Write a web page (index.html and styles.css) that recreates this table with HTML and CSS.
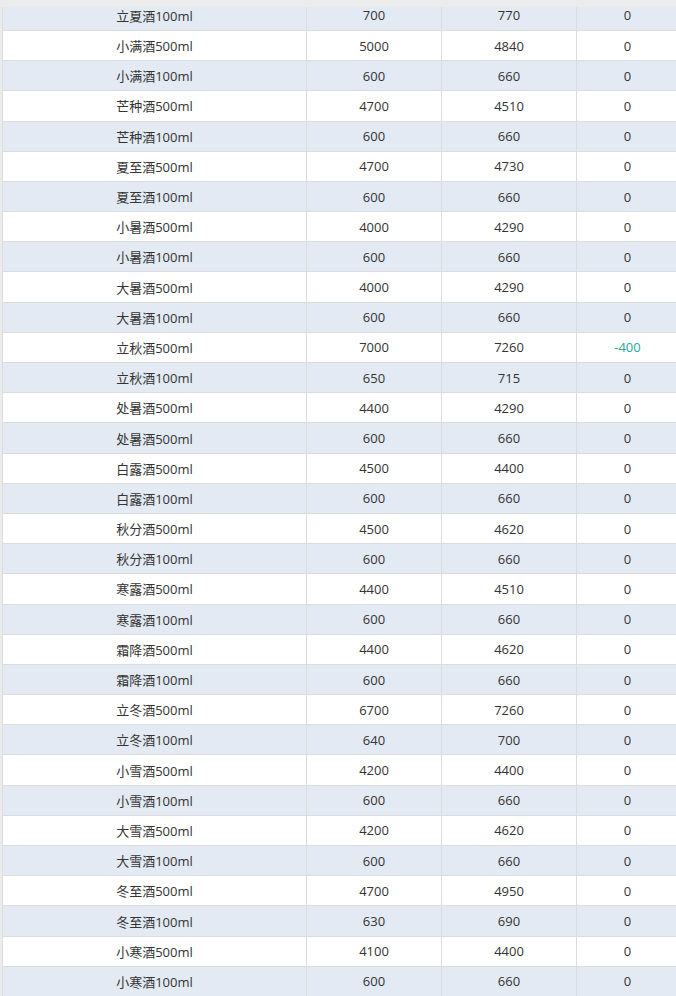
FILE: index.html
```html
<!DOCTYPE html>
<html lang="zh-CN">
<head>
<meta charset="utf-8">
<title>酒品价格表</title>
<link rel="stylesheet" href="styles.css">
</head>
<body>
<div class="topbar"></div>
<div class="table">
  <div class="row"><div class="cell">立夏酒100ml</div><div class="cell">700</div><div class="cell">770</div><div class="cell">0</div></div>
  <div class="row"><div class="cell">小满酒500ml</div><div class="cell">5000</div><div class="cell">4840</div><div class="cell">0</div></div>
  <div class="row"><div class="cell">小满酒100ml</div><div class="cell">600</div><div class="cell">660</div><div class="cell">0</div></div>
  <div class="row"><div class="cell">芒种酒500ml</div><div class="cell">4700</div><div class="cell">4510</div><div class="cell">0</div></div>
  <div class="row"><div class="cell">芒种酒100ml</div><div class="cell">600</div><div class="cell">660</div><div class="cell">0</div></div>
  <div class="row"><div class="cell">夏至酒500ml</div><div class="cell">4700</div><div class="cell">4730</div><div class="cell">0</div></div>
  <div class="row"><div class="cell">夏至酒100ml</div><div class="cell">600</div><div class="cell">660</div><div class="cell">0</div></div>
  <div class="row"><div class="cell">小暑酒500ml</div><div class="cell">4000</div><div class="cell">4290</div><div class="cell">0</div></div>
  <div class="row"><div class="cell">小暑酒100ml</div><div class="cell">600</div><div class="cell">660</div><div class="cell">0</div></div>
  <div class="row"><div class="cell">大暑酒500ml</div><div class="cell">4000</div><div class="cell">4290</div><div class="cell">0</div></div>
  <div class="row"><div class="cell">大暑酒100ml</div><div class="cell">600</div><div class="cell">660</div><div class="cell">0</div></div>
  <div class="row"><div class="cell">立秋酒500ml</div><div class="cell">7000</div><div class="cell">7260</div><div class="cell neg">-400</div></div>
  <div class="row"><div class="cell">立秋酒100ml</div><div class="cell">650</div><div class="cell">715</div><div class="cell">0</div></div>
  <div class="row"><div class="cell">处暑酒500ml</div><div class="cell">4400</div><div class="cell">4290</div><div class="cell">0</div></div>
  <div class="row"><div class="cell">处暑酒500ml</div><div class="cell">600</div><div class="cell">660</div><div class="cell">0</div></div>
  <div class="row"><div class="cell">白露酒500ml</div><div class="cell">4500</div><div class="cell">4400</div><div class="cell">0</div></div>
  <div class="row"><div class="cell">白露酒100ml</div><div class="cell">600</div><div class="cell">660</div><div class="cell">0</div></div>
  <div class="row"><div class="cell">秋分酒500ml</div><div class="cell">4500</div><div class="cell">4620</div><div class="cell">0</div></div>
  <div class="row"><div class="cell">秋分酒100ml</div><div class="cell">600</div><div class="cell">660</div><div class="cell">0</div></div>
  <div class="row"><div class="cell">寒露酒500ml</div><div class="cell">4400</div><div class="cell">4510</div><div class="cell">0</div></div>
  <div class="row"><div class="cell">寒露酒100ml</div><div class="cell">600</div><div class="cell">660</div><div class="cell">0</div></div>
  <div class="row"><div class="cell">霜降酒500ml</div><div class="cell">4400</div><div class="cell">4620</div><div class="cell">0</div></div>
  <div class="row"><div class="cell">霜降酒100ml</div><div class="cell">600</div><div class="cell">660</div><div class="cell">0</div></div>
  <div class="row"><div class="cell">立冬酒500ml</div><div class="cell">6700</div><div class="cell">7260</div><div class="cell">0</div></div>
  <div class="row"><div class="cell">立冬酒100ml</div><div class="cell">640</div><div class="cell">700</div><div class="cell">0</div></div>
  <div class="row"><div class="cell">小雪酒500ml</div><div class="cell">4200</div><div class="cell">4400</div><div class="cell">0</div></div>
  <div class="row"><div class="cell">小雪酒100ml</div><div class="cell">600</div><div class="cell">660</div><div class="cell">0</div></div>
  <div class="row"><div class="cell">大雪酒500ml</div><div class="cell">4200</div><div class="cell">4620</div><div class="cell">0</div></div>
  <div class="row"><div class="cell">大雪酒100ml</div><div class="cell">600</div><div class="cell">660</div><div class="cell">0</div></div>
  <div class="row"><div class="cell">冬至酒500ml</div><div class="cell">4700</div><div class="cell">4950</div><div class="cell">0</div></div>
  <div class="row"><div class="cell">冬至酒100ml</div><div class="cell">630</div><div class="cell">690</div><div class="cell">0</div></div>
  <div class="row"><div class="cell">小寒酒500ml</div><div class="cell">4100</div><div class="cell">4400</div><div class="cell">0</div></div>
  <div class="row"><div class="cell">小寒酒100ml</div><div class="cell">600</div><div class="cell">660</div><div class="cell">0</div></div>
</div>
</body>
</html>
```
FILE: styles.css
```css
html, body {
  margin: 0;
  padding: 0;
  background: #ececec;
  overflow: hidden;
}
body {
  font-family: "Open Sans", "Noto Sans CJK SC", sans-serif;
  font-size: 13px;
  color: #333;
}
.topbar {
  position: fixed;
  top: 0;
  left: 0;
  right: 0;
  height: 7px;
  background: #ececec;
  z-index: 2;
}
.table {
  margin-left: 2px;
  padding-top: 0.8px;
  width: 676px;
  border-left: 1px solid #dcdcdc;
  background: #e4eaf4;
}
.row {
  display: grid;
  grid-template-columns: 304px 135px 135px 102px;
  height: 30.19px;
  box-sizing: border-box;
  border-bottom: 1px solid #dcdcdc;
}
.row:nth-child(odd) {
  background: #e4eaf4;
}
.row:nth-child(even) {
  background: #fff;
}
.cell {
  display: flex;
  align-items: center;
  justify-content: center;
  border-right: 1px solid #dcdcdc;
  white-space: nowrap;
}
.neg {
  color: #26a69a;
}
```
